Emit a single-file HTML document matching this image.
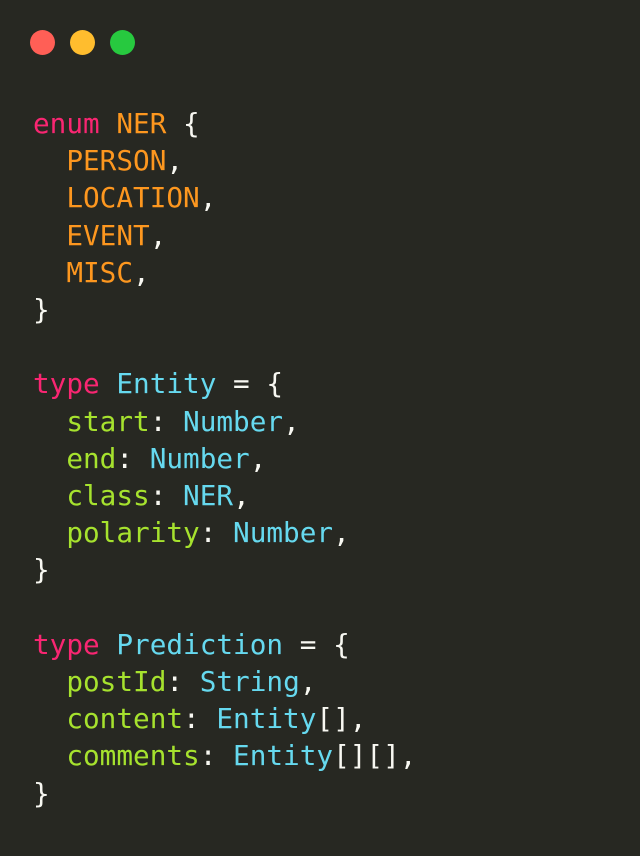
<!DOCTYPE html>
<html><head><style>
html,body{margin:0;padding:0;background:#272822;width:640px;height:856px;overflow:hidden}
.d{position:absolute;top:30px;width:25px;height:25px;border-radius:50%}
pre{position:absolute;left:33px;top:105px;margin:0;font-family:"DejaVu Sans Mono","Liberation Mono",monospace;font-size:27.7px;line-height:37.2px;color:#f8f8f2}
.k{color:#f92672}.o{color:#fd971f}.c{color:#66d9ef}.g{color:#a6e22e}
</style></head><body>
<div class="d" style="left:30px;background:#ff5f56"></div>
<div class="d" style="left:70px;background:#ffbd2e"></div>
<div class="d" style="left:110px;background:#27c93f"></div>
<pre><span class="k">enum</span> <span class="o">NER</span> {
  <span class="o">PERSON</span>,
  <span class="o">LOCATION</span>,
  <span class="o">EVENT</span>,
  <span class="o">MISC</span>,
}

<span class="k">type</span> <span class="c">Entity</span> = {
  <span class="g">start</span>: <span class="c">Number</span>,
  <span class="g">end</span>: <span class="c">Number</span>,
  <span class="g">class</span>: <span class="c">NER</span>,
  <span class="g">polarity</span>: <span class="c">Number</span>,
}

<span class="k">type</span> <span class="c">Prediction</span> = {
  <span class="g">postId</span>: <span class="c">String</span>,
  <span class="g">content</span>: <span class="c">Entity</span>[],
  <span class="g">comments</span>: <span class="c">Entity</span>[][],
}</pre>
</body></html>
